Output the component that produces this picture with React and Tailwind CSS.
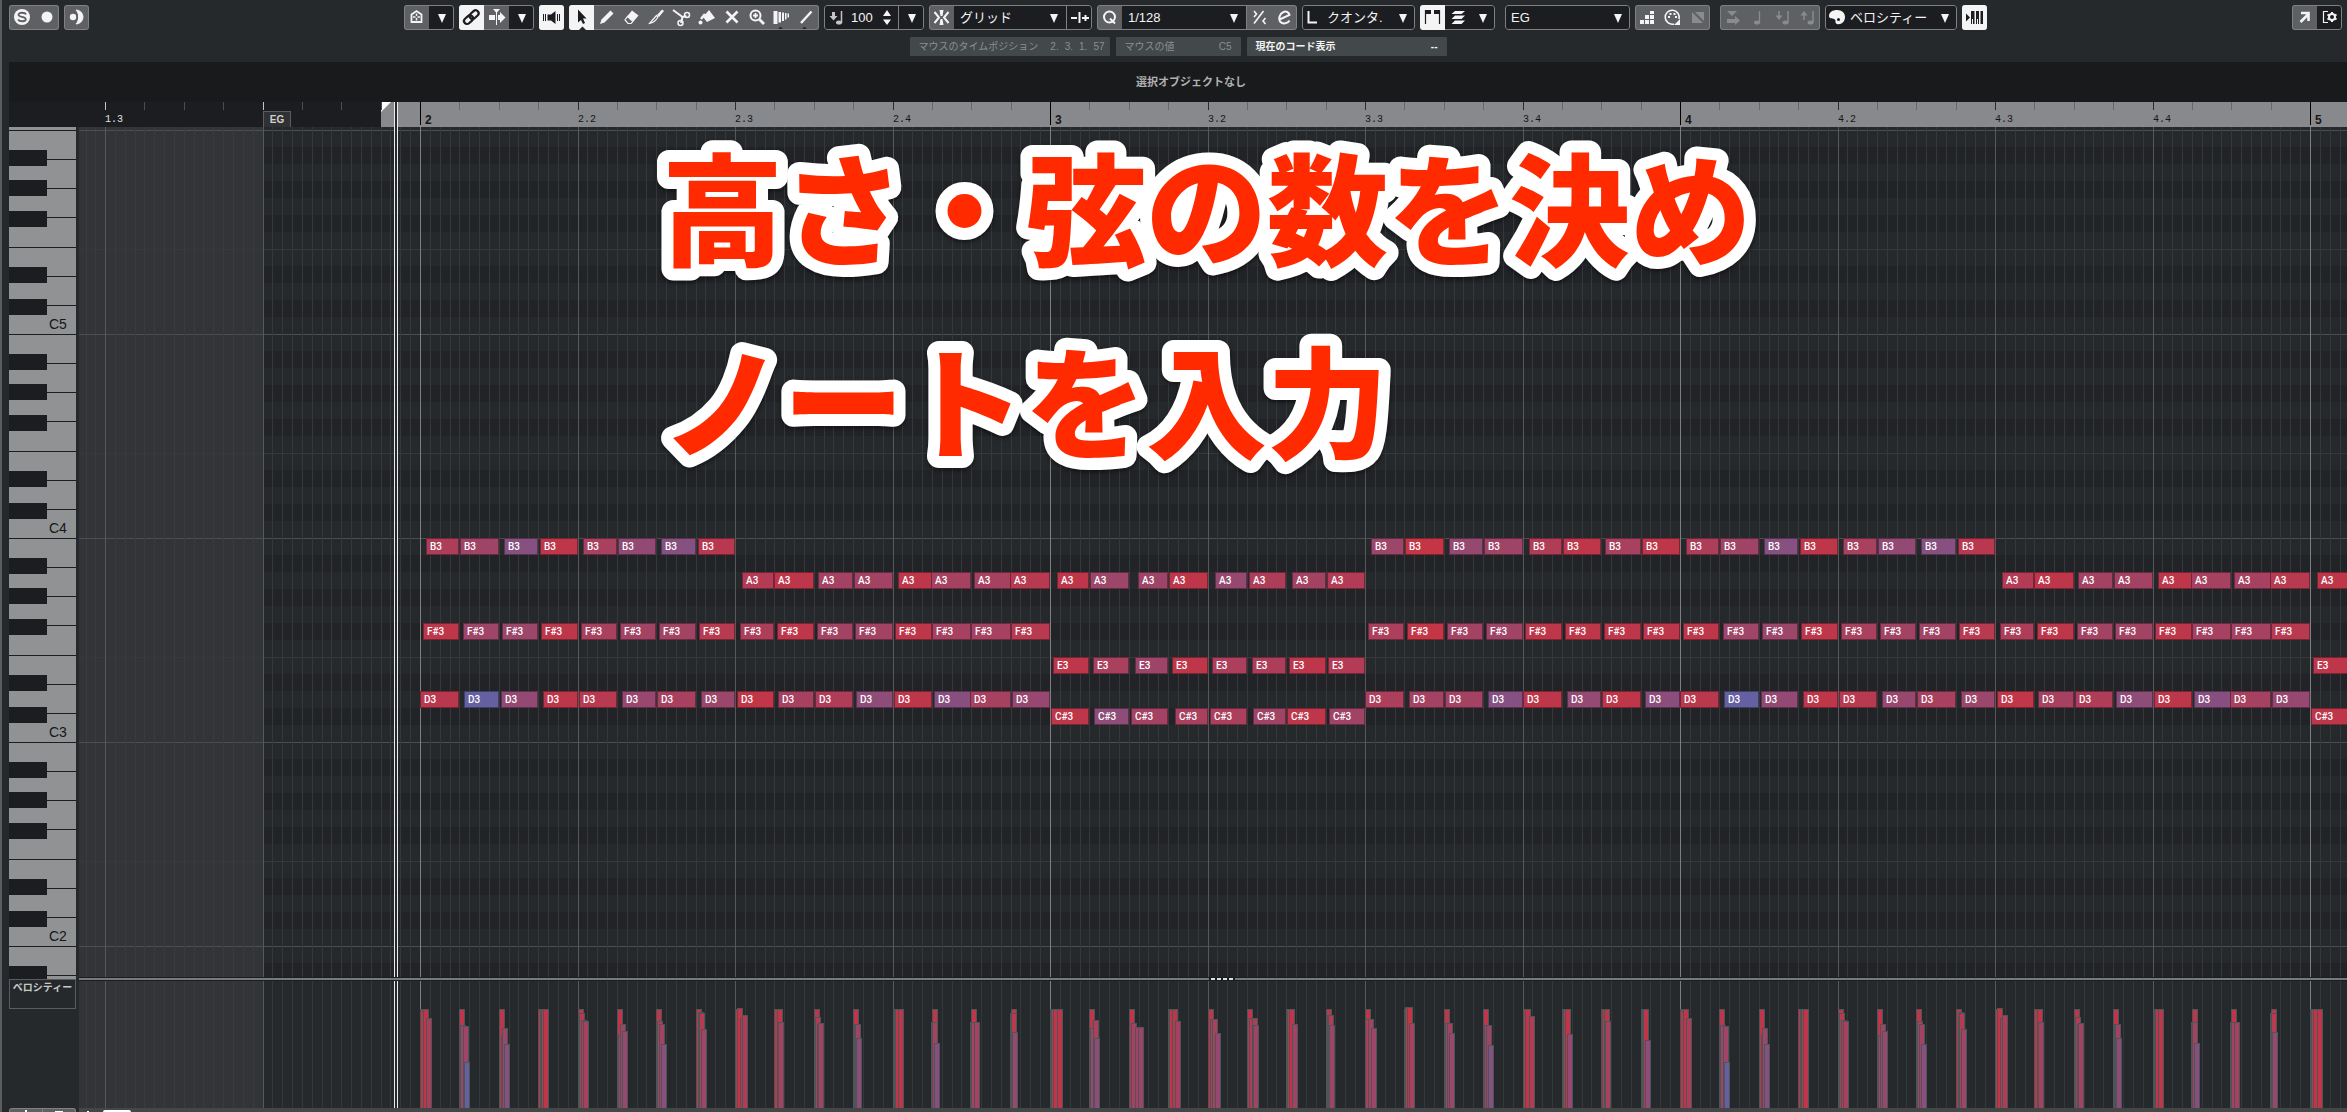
import clsx from "clsx";

// timeline: pixels from the left edge of the roll
const BEAT = 157.5;
const SIXTEENTH = BEAT / 4;
const START = 26;
const BAR_2 = START + BEAT * 2;
const BEATS = ["1.3", "", "2", "2.2", "2.3", "2.4", "3", "3.2", "3.3", "3.4", "4", "4.2", "4.3", "4.4", "5"];

const ROW_H = 17;
const OCTAVE = ["B", "A#", "A", "G#", "G", "F#", "F", "E", "D#", "D", "C#", "C"];
const ROW_TOP = { B3: 411, A3: 445, "F#3": 496, E3: 530, D3: 564, "C#3": 581 };

// [step, offset px, velocity]
const BAR_A = {
  D3: [
    [0, 0, 97], [1, 5, 46], [2, 2, 73], [3, 5, 99], [4, 1, 95], [5, 5, 77], [6, 1, 87], [7, 5, 79],
    [8, 2, 100], [9, 4, 86], [10, 1, 91], [11, 3, 70], [12, 1, 99], [13, 2, 65], [14, -1, 86], [15, 1, 76],
  ],
  "F#3": [
    [0, 3, 99], [1, 4, 82], [2, 3, 80], [3, 3, 99], [4, 3, 88], [5, 3, 84], [6, 3, 84], [7, 3, 95],
    [8, 5, 90], [9, 3, 99], [10, 3, 84], [11, 2, 84], [12, 2, 99], [13, 0, 86], [14, 0, 86], [15, 0, 95],
  ],
  B3: [[0, 6, 90], [1, 1, 83], [2, 5, 64], [3, 2, 99], [4, 5, 87], [5, 1, 73], [6, 5, 64], [7, 2, 96]],
  A3: [[8, 7, 93], [9, 0, 99], [10, 4, 85], [11, 1, 84], [12, 5, 99], [13, -1, 86], [14, 3, 86], [15, -1, 95]],
};

const BAR_B = {
  "C#3": [[0, 1, 99], [1, 5, 70], [2, 2, 85], [3, 7, 87], [4, 2, 89], [5, 6, 83], [6, 1, 99], [7, 3, 83]],
  E3: [[0, 3, 99], [1, 4, 88], [2, 6, 81], [3, 4, 99], [4, 4, 89], [5, 5, 90], [6, 3, 99], [7, 2, 93]],
  A3: [[0, 7, 99], [1, 1, 80], [2, 9, 81], [3, 1, 99], [4, 7, 75], [5, 2, 90], [6, 6, 84], [7, 1, 93]],
  D3: [[8, 0, 89], [9, 5, 85], [10, 1, 85], [11, 5, 63], [12, 0, 99], [13, 5, 74], [14, 1, 99], [15, 4, 68]],
  "F#3": [[8, 3, 89], [9, 3, 101], [10, 3, 85], [11, 3, 83], [12, 2, 99], [13, 3, 99], [14, 3, 99], [15, 2, 99]],
  B3: [[8, 6, 80], [9, 1, 101], [10, 5, 75], [11, 1, 83], [12, 6, 92], [13, 1, 99], [14, 4, 87], [15, 1, 99]],
};

const BAR_B_START = {
  "C#3": BAR_B["C#3"].slice(0, 1),
  E3: BAR_B.E3.slice(0, 1),
  A3: BAR_B.A3.slice(0, 1),
};

function expand(bar, index) {
  return Object.entries(bar).flatMap(([pitch, list]) =>
    list.map(([step, off, vel]) => {
      const x0 = BAR_2 + (index * 16 + step) * SIXTEENTH;
      const left = Math.round(x0 + off);
      return { pitch, vel, left, width: Math.round(x0 + SIXTEENTH) - left };
    })
  );
}

const NOTES = [...expand(BAR_A, 0), ...expand(BAR_B, 1), ...expand(BAR_A, 2), ...expand(BAR_B_START, 3)];

const STOPS = [
  [46, 100, 96, 162],
  [64, 134, 80, 128],
  [83, 160, 68, 102],
  [99, 190, 54, 74],
  [101, 196, 54, 70],
];

function velColor(v) {
  for (let i = 1; i < STOPS.length; i++) {
    const a = STOPS[i - 1];
    const b = STOPS[i];
    if (v <= b[0]) {
      const t = (v - a[0]) / (b[0] - a[0]);
      const c = [1, 2, 3].map((k) => Math.round(a[k] + (b[k] - a[k]) * t));
      return `rgb(${c.join(",")})`;
    }
  }
  return "rgb(196,54,70)";
}

/* ---------- toolbar parts ---------- */

function Icon({ children, w = 25 }) {
  return (
    <svg width={w} height="25" viewBox={`0 0 ${w} 25`} fill="none" stroke="none" className="block" aria-hidden="true">
      {children}
    </svg>
  );
}

function Group({ children, dark, className }) {
  return (
    <div
      className={clsx(
        "relative flex h-[25px] shrink-0 overflow-hidden rounded-[3px] after:pointer-events-none after:absolute after:inset-0 after:rounded-[3px] after:border after:border-[#7f8082]",
        dark ? "bg-[#1c1d21]" : "bg-[#5f6063]",
        className
      )}
    >
      {children}
    </div>
  );
}

function Tool({ label, tone = "gray", children }) {
  return (
    <button
      aria-label={label}
      className={clsx(
        "h-[25px] w-[25px] shrink-0",
        tone === "gray" && "bg-[#5f6063] text-[#f4f4f4]",
        tone === "dark" && "bg-[#1c1d21] text-[#f4f4f4]",
        tone === "on" && "relative z-10 bg-[#f4f4f4] text-[#1c1d21]",
        tone === "off" && "bg-[#5f6063] text-[#8a8b8d]"
      )}
    >
      {children}
    </button>
  );
}

function Caret() {
  return (
    <Icon>
      <path d="M9 9h8l-4 9z" fill="currentColor" />
    </Icon>
  );
}

function Pick({ label, value, tight, className }) {
  return (
    <label className={clsx("relative block h-[25px] bg-[#1c1d21] text-[#f4f4f4]", className)}>
      <select
        aria-label={label}
        className={clsx(
          "h-full w-full appearance-none bg-transparent text-[13px] leading-[25px] outline-none",
          tight ? "pl-0" : "pl-[6px]"
        )}
      >
        <option>{value}</option>
      </select>
      <svg className="pointer-events-none absolute top-[9px] right-[8px]" width="8" height="9" viewBox="0 0 8 9" aria-hidden="true">
        <path d="M0 0h8l-4 9z" fill="currentColor" />
      </svg>
    </label>
  );
}

function Toolbar() {
  return (
    <div className="flex h-[25px] gap-[5px]">
      <div className="flex w-[390px] shrink-0 gap-[5px]">
        <Group>
          <Tool label="ソロ">
            <Icon>
              <circle cx="13" cy="12" r="8" fill="currentColor" />
              <path d="M17 9.500C16 7.300 9.500 7 9.500 9.700c0 2.900 7.300 1.500 7.300 4.500 0 2.800-6.500 2.600-7.800.3" stroke="#5f6063" strokeWidth="1.800" />
            </Icon>
          </Tool>
          <Tool label="録音">
            <Icon>
              <circle cx="13" cy="12" r="5.500" fill="currentColor" />
            </Icon>
          </Tool>
        </Group>
        <Group>
          <Tool label="フィードバック">
            <Icon>
              <circle cx="9" cy="12" r="3.200" fill="currentColor" />
              <path d="M12 5a7 7 0 0 1 0 14c3.500-3.500 3.500-10.500 0-14z" fill="currentColor" stroke="currentColor" strokeWidth="1" />
            </Icon>
          </Tool>
        </Group>
      </div>

      <Group>
        <Tool label="ゾーン">
          <Icon>
            <path d="M7.500 17V9.500l5-3.500 5 3.500V17z" stroke="currentColor" strokeWidth="1.800" />
            <path d="M12.500 8.500v2.500m0 2v2.500M9 12h2.500m2 0H16" stroke="currentColor" strokeWidth="1.500" />
          </Icon>
        </Tool>
        <Tool label="ゾーン設定" tone="dark"><Caret /></Tool>
      </Group>

      <Group>
        <Tool label="リンク" tone="on">
          <Icon>
            <g transform="rotate(-42 12.500 12)" stroke="currentColor" strokeWidth="2.200">
              <rect x="3.500" y="9" width="10" height="6" rx="3" />
              <rect x="11" y="9" width="10" height="6" rx="3" />
            </g>
          </Icon>
        </Tool>
        <Tool label="オートスクロール">
          <Icon>
            <path d="M5 10h6v5H5zM14 10h2V7l5.500 5.500L16 18v-3h-2zM9 4h7l-3.500 4z" fill="currentColor" />
            <path d="M12.500 4v16" stroke="currentColor" />
          </Icon>
        </Tool>
        <Tool label="スクロール設定" tone="dark"><Caret /></Tool>
      </Group>

      <Group>
        <Tool label="試聴" tone="on">
          <Icon>
            <path d="M8.500 9.500H12L16.500 6v13L12 15.500H8.500z" fill="currentColor" />
            <path d="M4.500 9v7M6.500 9v7M18.500 9v7M20.500 9v7" stroke="currentColor" strokeWidth="1" />
          </Icon>
        </Tool>
      </Group>

      <Group>
        <Tool label="選択" tone="on">
          <Icon>
            <path d="M9 4.500v13l3-2.500 2 4 2-1-2-4.500h3.500z" fill="currentColor" />
            <path d="M10 25l3.500-3.500L17 25z" fill="#25292b" />
          </Icon>
        </Tool>
        <Tool label="鉛筆">
          <Icon>
            <path d="M6 19l1.500-4.500 9-9 3 3-9 9z" fill="currentColor" />
          </Icon>
        </Tool>
        <Tool label="消しゴム">
          <Icon>
            <path d="M13 5.500l6.500 5-5 6-6.500-5z" fill="currentColor" />
            <path d="M8.500 11.500l5.500 5-2 2H9L6 15z" stroke="currentColor" strokeWidth="1.200" />
          </Icon>
        </Tool>
        <Tool label="トリム">
          <Icon>
            <path d="M18 4.500l2 1.500-5 6-2-2z" fill="currentColor" />
            <path d="M12.500 10.500L5.500 18.500c4-.5 6.500-3 8.500-6.500z" stroke="currentColor" strokeWidth="1.200" />
          </Icon>
        </Tool>
        <Tool label="はさみ">
          <Icon>
            <path d="M4 5l9.500 7M12 18l1.500-6 4-1" stroke="currentColor" strokeWidth="2" />
            <circle cx="18" cy="10" r="2.500" stroke="currentColor" strokeWidth="1.500" />
            <circle cx="11.500" cy="18" r="2.500" stroke="currentColor" strokeWidth="1.500" />
          </Icon>
        </Tool>
        <Tool label="のり">
          <Icon>
            <path d="M15 5l6 8-8 4-4-5z" fill="currentColor" />
            <path d="M11 9l-4 5" stroke="currentColor" strokeWidth="2.500" />
            <circle cx="6.500" cy="17.500" r="2" fill="currentColor" />
          </Icon>
        </Tool>
        <Tool label="ミュート">
          <Icon>
            <path d="M7.500 6.500l11 11m0-11l-11 11" stroke="currentColor" strokeWidth="2.600" />
          </Icon>
        </Tool>
        <Tool label="ズーム">
          <Icon>
            <circle cx="11.500" cy="10.500" r="5" stroke="currentColor" strokeWidth="2" />
            <path d="M15.500 14.500l4.500 4.500" stroke="currentColor" strokeWidth="2.800" />
            <path d="M11.500 8v5M9 10.500h5" stroke="currentColor" strokeWidth="1.800" />
          </Icon>
        </Tool>
        <Tool label="タイムワープ">
          <Icon>
            <path d="M4.500 6h4v13h-4zM9.500 7H12v10.500H9.500zM13 7.500h2v8.500h-2zM16 8h1.500v6.500H16zM18.500 8.500h1.500v4h-1.500z" fill="currentColor" />
            <path d="M8 25l3.500-3.500L15 25z" fill="#25292b" />
          </Icon>
        </Tool>
        <Tool label="ライン">
          <Icon>
            <path d="M7 18L17.500 6.500" stroke="currentColor" strokeWidth="2.400" />
            <path d="M7 25l3.500-3.500L14 25z" fill="#25292b" />
          </Icon>
        </Tool>
      </Group>

      <Group dark className="text-[#f4f4f4]">
        <Icon>
          <path d="M8 7h3v4h2.500l-4 4.500-4-4.500H8z" fill="#c4c4c5" />
          <path d="M17.500 6v12" stroke="#c4c4c5" strokeWidth="1.500" />
          <ellipse cx="15" cy="17.500" rx="3" ry="2" fill="#c4c4c5" />
        </Icon>
        <input aria-label="ベロシティー値" defaultValue="100" className="w-[25px] bg-transparent pl-[2px] text-[13px] outline-none" />
        <button aria-label="増減" className="w-[24px]">
          <Icon w={24}>
            <path d="M9 11l4-6 4 6zM9 14.500h8L13 20z" fill="currentColor" />
          </Icon>
        </button>
        <div className="w-px bg-[#7f8082]" />
        <Tool label="ベロシティー設定" tone="dark"><Caret /></Tool>
      </Group>

      <Group dark>
        <Tool label="スナップ">
          <Icon>
            <path d="M10.500 5h4l-1 6h-2zM11.500 14h2l1 6h-4z" fill="currentColor" />
            <path d="M5.500 7l4.500 5.500L5.500 18M19.500 7L15 12.500l4.500 5.500" stroke="currentColor" strokeWidth="2" />
          </Icon>
        </Tool>
        <Pick label="スナップタイプ" value="グリッド" className="w-[112px]" />
        <div className="w-px bg-[#7f8082]" />
        <Tool label="グリッド相対" tone="dark">
          <Icon>
            <path d="M4 13h6M12.500 7v11M15 13h7M18.500 10v6" stroke="currentColor" strokeWidth="2" />
          </Icon>
        </Tool>
      </Group>

      <Group dark>
        <Tool label="クオンタイズ">
          <Icon>
            <circle cx="12.500" cy="12" r="5.500" stroke="currentColor" strokeWidth="2" />
            <path d="M13 13.500l5 5" stroke="currentColor" strokeWidth="2" />
          </Icon>
        </Tool>
        <Pick label="クオンタイズ値" value="1/128" className="w-[124px]" />
        <div className="w-px bg-[#7f8082]" />
        <Tool label="ソフトクオンタイズ">
          <Icon>
            <path d="M7 18.500L16.500 6M7 6l2.500 3L7 12M18.500 13L16 16l2.500 3" stroke="currentColor" strokeWidth="1.600" />
          </Icon>
        </Tool>
        <Tool label="クオンタイズパネル">
          <Icon>
            <path d="M7.500 14.500l10-4.500c-.5-3-3.500-4-6-3-4 1.500-5.500 7-3 10 2.500 2.500 7.500 1.500 9-1.500" stroke="currentColor" strokeWidth="2" />
          </Icon>
        </Tool>
      </Group>

      <Group dark className="text-[#f4f4f4]">
        <Icon>
          <path d="M6.500 6v11.500H15" stroke="currentColor" strokeWidth="2" />
        </Icon>
        <Pick label="長さクオンタイズ" value="クオンタ." tight className="w-[88px]" />
      </Group>

      <Group dark>
        <Tool label="イベント境界" tone="on">
          <Icon>
            <path d="M5 5h6v4H5zM14 5h6v4h-6z" fill="currentColor" />
            <path d="M5.500 5v14M19.500 5v14" stroke="currentColor" strokeWidth="1.200" />
          </Icon>
        </Tool>
        <Tool label="複数パート" tone="dark">
          <Icon>
            <path d="M10 6h10l-3.500 3H6.500zM10 10.500h10l-3.500 3.500H6.500zM10 15.500h10L16.500 19H6.500z" fill="currentColor" />
          </Icon>
        </Tool>
        <Tool label="パート設定" tone="dark"><Caret /></Tool>
      </Group>

      <div className="w-0" />
      <Group dark>
        <Pick label="パート" value="EG" className="w-[125px]" />
      </Group>

      <Group>
        <Tool label="ステップ入力">
          <Icon>
            <path d="M5 15h4v4H5zM10 15h4v4h-4zM15 15h4v4h-4zM10 10h4v4h-4zM15 10h4v4h-4zM15 6h4v3h-4z" fill="currentColor" />
          </Icon>
        </Tool>
        <Tool label="MIDI 入力">
          <Icon>
            <path d="M14 19a7 7 0 1 1 5-5" stroke="currentColor" strokeWidth="1.600" />
            <path d="M8 11h2v2H8zM9.500 8h2v2h-2zM13.500 8h2v2h-2zM15 11h2v2h-2zM20 14v6h-6z" fill="currentColor" />
          </Icon>
        </Tool>
        <Tool label="入力オフ" tone="off">
          <Icon>
            <path d="M7 7l11 11H7zM10 7h9v9z" fill="currentColor" />
          </Icon>
        </Tool>
      </Group>

      <div className="w-0" />
      <Group>
        <Tool label="移動挿入" tone="off">
          <Icon>
            <path d="M7 6h10l-5 5zM7 14h8v-3l5 4.500-5 4.500v-2H7z" fill="currentColor" />
          </Icon>
        </Tool>
        <Tool label="ピッチ入力" tone="off">
          <Icon>
            <path d="M14.500 6v11" stroke="currentColor" strokeWidth="1.300" />
            <ellipse cx="12" cy="17.500" rx="3" ry="2" fill="currentColor" />
          </Icon>
        </Tool>
        <Tool label="ノートオン" tone="off">
          <Icon>
            <path d="M18 6v11M9 6v5" stroke="currentColor" strokeWidth="1.500" />
            <path d="M5.500 10.500h7L9 15z" fill="currentColor" />
            <ellipse cx="15.500" cy="17.500" rx="3" ry="2" fill="currentColor" />
          </Icon>
        </Tool>
        <Tool label="ノートオフ" tone="off">
          <Icon>
            <path d="M18 6v11M9 9v6" stroke="currentColor" strokeWidth="1.500" />
            <path d="M5.500 10.500h7L9 6z" fill="currentColor" />
            <ellipse cx="15.500" cy="17.500" rx="3" ry="2" fill="currentColor" />
          </Icon>
        </Tool>
      </Group>

      <Group dark className="text-[#f4f4f4]">
        <Icon>
          <path d="M4 11c0-4 4-6 8-6 5 0 8 3 8 7 0 5-4 8-8 7-3-1 0-4-3-5-2-1-5 0-5-3z" fill="currentColor" />
          <circle cx="13.500" cy="14.500" r="1.500" fill="#1c1d21" />
        </Icon>
        <Pick label="イベントカラー" value="ベロシティー" tight className="w-[107px]" />
      </Group>

      <Group>
        <Tool label="鍵盤表示" tone="on">
          <Icon>
            <path d="M4 8.500l4 4-4 4zM9 6h3.500v13H9zM14 6h3v13h-3zM18.500 6H21v13h-2.500z" fill="currentColor" />
            <path d="M10.500 14v5M15.500 14v5" stroke="#f4f4f4" strokeWidth="1" />
          </Icon>
        </Tool>
      </Group>

      <Group className="mr-[5px] ml-auto">
        <Tool label="ウィンドウで開く">
          <Icon>
            <path d="M8.500 17l7.500-7.500M9 8h7.500v8" stroke="currentColor" strokeWidth="2.600" />
          </Icon>
        </Tool>
        <Tool label="設定" tone="dark">
          <Icon>
            <path d="M11 6.500H6.500v11H11" stroke="currentColor" strokeWidth="1.200" />
            <circle cx="15" cy="12" r="3" stroke="currentColor" strokeWidth="2" />
            <path d="M15 7v2m0 6v2M10.500 9.500l1.500 1m6 3l1.500 1m0-5l-1.500 1m-6 3l-1.500 1" stroke="currentColor" strokeWidth="2" />
          </Icon>
        </Tool>
      </Group>
    </div>
  );
}

function InfoRow() {
  return (
    <div className="mt-[7px] flex h-[19px] justify-center gap-[6px] text-[10px] leading-[19px]">
      <div className="flex w-[200px] justify-between rounded-[1px] bg-[#43484a] pr-[5px] pl-[9px] text-[#8c8f90]">
        <span>マウスのタイムポジション</span>
        <span className="flex gap-[6px]">
          <span>2.</span>
          <span>3.</span>
          <span>1.</span>
          <span>57</span>
        </span>
      </div>
      <div className="flex w-[125px] justify-between rounded-[1px] bg-[#43484a] pr-[9px] pl-[9px] text-[#8c8f90]">
        <span>マウスの値</span>
        <span>C5</span>
      </div>
      <div className="flex w-[200px] justify-between rounded-[1px] bg-[#43484a] pr-[9px] pl-[9px] font-bold text-[#f4f4f4]">
        <span>現在のコード表示</span>
        <span>--</span>
      </div>
    </div>
  );
}

/* ---------- timeline ---------- */

function Cursor() {
  return <div className="absolute inset-y-0 left-[315px] w-[4px] border-x border-[#ececec] bg-[#25292b]" />;
}

function Ruler() {
  const ticks = Array.from({ length: 60 }, (_, i) => i);
  return (
    <div className="ml-[7px] h-[25px] bg-[#1c1d21] pl-[70px]">
      <div className="relative h-full overflow-hidden">
        <div className="absolute inset-y-0 right-0 left-[302px] bg-[#88898c]">
          <svg width="10" height="10" aria-hidden="true">
            <path d="M0 0h10L0 10z" fill="#fff" />
          </svg>
        </div>
        {ticks.map((i) => {
          const bar = i >= 8 && (i - 8) % 16 === 0;
          return (
            <div
              key={i}
              className={clsx(
                "absolute top-0 w-px",
                bar ? "h-[23px] bg-black" : "h-[8px]",
                !bar && i % 4 === 0 && (i < 8 ? "bg-[#c4c4c5]" : "bg-[#2b2c2e]"),
                !bar && i % 4 !== 0 && (i < 8 ? "bg-[#4b4c4f]" : "bg-[#66676a]")
              )}
              style={{ left: Math.round(START + i * SIXTEENTH) }}
            />
          );
        })}
        {BEATS.map((b, i) => (
          <span
            key={i}
            className={clsx(
              "absolute top-[12px] leading-[12px]",
              b.length === 1 ? "pl-[5px] text-[12px] font-bold" : "font-['Liberation_Mono'] text-[10px]",
              i === 0 ? "text-[#e4e4e4]" : "text-[#151618]"
            )}
            style={{ left: Math.round(START + i * BEAT) }}
          >
            {b}
          </span>
        ))}
        <span className="absolute top-[9px] left-[184px] h-[16px] w-[28px] border border-b-0 border-[#5b5c5f] bg-[#2f3133] text-center text-[10px] leading-[15px] font-bold text-[#d0d0d0]">
          EG
        </span>
        <Cursor />
      </div>
    </div>
  );
}

function GridLines() {
  return Array.from({ length: 240 }, (_, i) => (
    <div
      key={i}
      className={clsx(
        "absolute inset-y-0 w-px",
        i % 16 !== 0 && (i < 16 ? "bg-[#3a3b3e]" : "bg-[#34383a]"),
        i % 16 === 0 && (i >= 32 && (i - 32) % 64 === 0 ? "bg-[#7b7f80]" : "bg-[#56595b]")
      )}
      style={{ left: Math.round(START + (i * BEAT) / 16) }}
    />
  ));
}

function BeforePart() {
  return (
    <div className="absolute inset-y-0 left-0 w-[184px] bg-[#333438]">
      <div className="absolute inset-y-0 left-[7px] w-px bg-[#3a3b3e]" />
      <div className="absolute inset-y-0 left-[16px] w-px bg-[#3a3b3e]" />
    </div>
  );
}

function Note({ note }) {
  return (
    <div
      className="absolute border border-black/35 pl-[3px] font-['Roboto','Liberation_Sans',sans-serif] text-[10px] leading-[15px] font-medium text-white"
      style={{
        left: note.left,
        width: note.width,
        height: ROW_H,
        top: ROW_TOP[note.pitch],
        backgroundColor: velColor(note.vel),
      }}
    >
      {note.pitch}
    </div>
  );
}

function Roll() {
  const rows = Array.from({ length: 50 }, (_, i) => OCTAVE[i % 12]);
  return (
    <div className="relative min-h-0 flex-1 overflow-hidden bg-[#25292b]">
      <BeforePart />
      <div className="h-[3px]" />
      {rows.map((name, i) => (
        <div
          key={i}
          className={clsx(
            "relative h-[17px]",
            name.length === 2 && "ml-[184px] bg-[#222327]",
            name === "B" && "border-t border-[#4b4f51]",
            name === "E" && "border-t border-[#35393b]"
          )}
        />
      ))}
      <GridLines />
      {NOTES.map((n, i) => (
        <Note key={i} note={n} />
      ))}
      <Cursor />
    </div>
  );
}

function VelocityLane() {
  const steps = Array.from({ length: 49 }, (_, i) => ({
    left: Math.round(BAR_2 + i * SIXTEENTH),
    vel: 99,
  }));
  const bars = [...NOTES].sort((a, b) => a.left - b.left);
  return (
    <div className="relative h-[127px] overflow-hidden bg-[#25292b]">
      <BeforePart />
      <GridLines />
      {[...steps, ...bars].map((b, i) => (
        <div
          key={i}
          className="absolute bottom-0 w-[6px] border border-b-0 border-[#505456]"
          style={{ left: b.left, height: b.vel, backgroundColor: velColor(b.vel) }}
        />
      ))}
      <Cursor />
    </div>
  );
}

const BLACK_KEYS = ["top-[19px]", "top-[49px]", "top-[80px]", "top-[136px]", "top-[168px]"];

function Piano() {
  return (
    <div className="min-h-0 flex-1 overflow-hidden bg-[#919294]">
      <div className="h-[4px] border-b border-[#1c1d21]" />
      {[5, 4, 3, 2, 1].map((oct) => (
        <div key={oct} className="relative flex h-[204px] flex-col">
          {["B", "A", "G", "F", "E", "D", "C"].map((k) => (
            <div key={k} className="flex-1 border-b border-[#1c1d21] pt-[9px] pl-[40px] text-[14px] leading-[18px] text-[#151618]">
              {k === "C" && oct > 1 ? `C${oct}` : null}
            </div>
          ))}
          {BLACK_KEYS.map((top) => (
            <div key={top} className={clsx("absolute left-0 h-[16px] w-[38px] bg-[#1c1d21]", top)} />
          ))}
        </div>
      ))}
    </div>
  );
}

function Caption() {
  return (
    <svg
      width="1140"
      height="370"
      className="pointer-events-none absolute top-[120px] left-[640px] fill-[#ff2a00] stroke-white stroke-[24px] text-[121px] font-black drop-shadow-[0_2px_2px_rgba(0,0,0,0.5)] [paint-order:stroke_fill] [stroke-linejoin:round]"
    >
      <text x="20" y="136">高さ・弦の数を決め</text>
      <text x="20" y="329">ノートを入力</text>
    </svg>
  );
}

export default function App() {
  return (
    <div className="relative flex h-screen flex-col overflow-hidden border-l-2 border-[#5b5c5f] bg-[#25292b] font-['Liberation_Sans','Noto_Sans_CJK_JP',sans-serif]">
      <header className="pt-[5px] pb-[6px] pl-[7px]">
        <Toolbar />
        <InfoRow />
      </header>

      <div className="ml-[7px] flex h-[40px] items-center justify-center bg-[#191a1b] pl-[26px] text-[11px] font-bold text-[#b0b1b2]">
        選択オブジェクトなし
      </div>

      <Ruler />

      <main className="ml-[7px] flex min-h-0 flex-1">
        <div className="mr-[3px] flex w-[67px] shrink-0 flex-col">
          <Piano />
          <div className="h-[30px] shrink-0 border border-[#5b5c5f] text-center text-[10px] leading-[15px] font-bold text-[#c8c9ca]">
            ベロシティー
          </div>
          <div className="h-[99px] shrink-0" />
          <div className="flex h-[4px] shrink-0 overflow-hidden rounded-t-[3px] border border-b-0 border-[#7f8082] bg-[#5f6063]">
            <button aria-label="レーンを追加" className="flex h-full flex-1 items-end justify-center border-r border-[#7f8082]">
              <span className="h-[2px] w-[2px] bg-white" />
            </button>
            <button aria-label="レーンを設定" className="flex h-full flex-1 items-end justify-center">
              <span className="h-px w-[8px] bg-white" />
            </button>
          </div>
        </div>

        <div className="flex min-w-0 flex-1 flex-col">
          <Roll />
          <div className="flex h-[4px] shrink-0 items-center bg-[#1c1d21]">
            <div className="h-[2px] w-[18px] bg-[#77797b]" />
            <div className="h-[2px] flex-1 bg-[#77797b]" />
            <div className="flex w-[26px] justify-center gap-[2px]">
              {[0, 1, 2, 3].map((i) => (
                <span key={i} className="h-[2px] w-[4px] bg-[#dedede]" />
              ))}
            </div>
            <div className="h-[2px] flex-1 bg-[#77797b]" />
          </div>
          <VelocityLane />
          <div className="flex h-[4px] shrink-0 items-end bg-[#434748] pl-[8px]">
            <span className="mr-[14px] h-px w-[2px] bg-white" />
            <span className="h-[2px] w-[28px] rounded-t-[2px] bg-white" />
          </div>
        </div>
      </main>

      <Caption />
    </div>
  );
}
